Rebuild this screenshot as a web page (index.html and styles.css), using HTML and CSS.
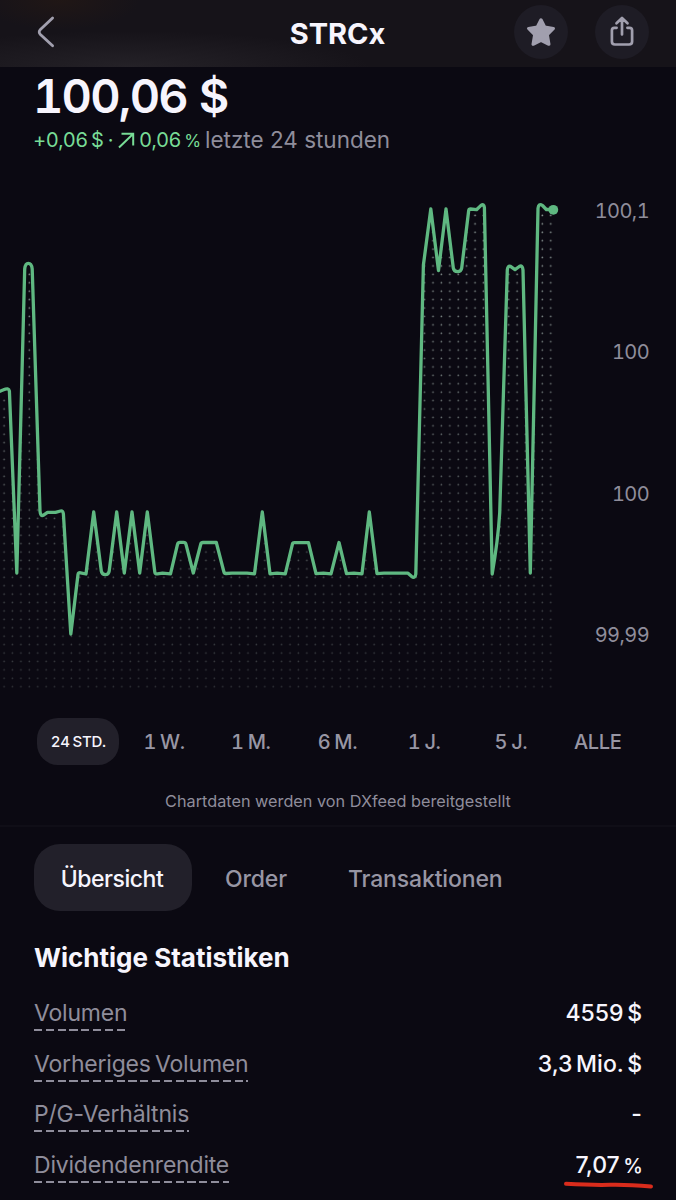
FILE: index.html
```
<!DOCTYPE html>
<html lang="de">
<head>
  <meta charset="UTF-8">
  <meta name="viewport" content="width=device-width, initial-scale=1.0">
  <title>STRCx</title>
  <link rel="stylesheet" href="styles.css">
</head>
<body>
  <header class="topbar">
    <button class="back-btn" aria-label="Zurück">
      <svg width="18" height="32" viewBox="0 0 18 32"><path d="M15.6 2 L3.4 13.6 Q1 16 3.4 18.4 L15.6 29.8"/></svg>
    </button>
    <h1 class="title">STRCx</h1>
    <div class="actions">
      <button class="icon-btn" aria-label="Favorit">
        <svg width="32" height="32" viewBox="0 0 32 32">
          <path class="star" d="M16 3.8 L19.8 11.2 L28.4 12.5 L22.3 18.7 L23.9 28.2 L16 24.2 L8.1 28.2 L9.7 18.7 L3.6 12.5 L12.2 11.2 Z"/>
        </svg>
      </button>
      <button class="icon-btn" aria-label="Teilen">
        <svg width="32" height="32" viewBox="0 0 32 32">
          <path class="share" d="M10.6 11.8 H8.4 Q5.9 11.8 5.9 14.3 V25.5 Q5.9 28.5 8.9 28.5 H23.1 Q26.1 28.5 26.1 25.5 V14.3 Q26.1 11.8 23.6 11.8 H21.4 M16 18.5 V2.6 M10.5 7.2 L16 2 L21.5 7.2"/>
        </svg>
      </button>
    </div>
  </header>

  <main>
    <section class="quote">
      <div class="price">100,06 $</div>
      <div class="change">
        <span class="up">+0,06 $</span>
        <span class="up dot">·</span>
        <svg class="arrow" width="18" height="18" viewBox="0 0 18 18"><path d="M2 16.5 L16 3 M4.5 2.8 H16.2 V14.5"/></svg>
        <span class="up">0,06 <span class="percent">%</span></span>
        <span class="period">letzte 24 stunden</span>
      </div>
    </section>

    <section class="chart">
      <svg class="plot" width="566" height="530" viewBox="0 170 566 530">
        <defs>
          <pattern id="dots" width="8.41" height="8.415" patternUnits="userSpaceOnUse">
            <circle cx="4.1" cy="5.1" r="0.85" fill="#8f9b98"/>
          </pattern>
          <linearGradient id="fade" x1="0" y1="200" x2="0" y2="690" gradientUnits="userSpaceOnUse">
            <stop offset="0" stop-color="#fff" stop-opacity="1"/>
            <stop offset="1" stop-color="#fff" stop-opacity="0.3"/>
          </linearGradient>
          <mask id="fadeMask" maskUnits="userSpaceOnUse" x="0" y="170" width="566" height="530">
            <rect x="0" y="170" width="566" height="520" fill="url(#fade)"/>
          </mask>
        </defs>
        <g mask="url(#fadeMask)">
          <path fill="url(#dots)" d="M0 395 L9 392 L16.8 573 L24.5 270 L32.5 270 L40 516 L63 514 L70.8 634 L78 576 L86 576 L93.7 514 L101.5 576 L109 576 L116.7 514 L124.3 573 L132 514 L139.7 573 L147.3 514 L155 576 L170.5 576 L178 545 L185.5 545 L193.3 576 L201 545 L216.5 545 L224 576 L254.5 576 L262.3 514 L270 576 L285 576 L293 545 L308.5 545 L316 576 L331 576 L339 545 L346.5 576 L362 576 L369.3 514 L377 576 L416 580 L423.3 268 L430.8 212 L438.5 272 L446 212 L453 273 L461.7 273 L469 212 L484.5 210 L492.2 574 L499.5 515 L507.5 270 L523 270 L530.5 573 L538 210 L555 212 L555 690 L0 690 Z"/>
        </g>
        <path class="line" d="M0 391.3 L3.5 389.8 Q8.8 387.3 9.4 391 L16.8 573 L24.7 269 Q25.3 263.4 28.3 263.4 Q31.6 263.4 32.2 269 L40 511 Q40.4 516.6 43.5 515.2 L47.5 512.4 H55.5 L60.5 511 Q63 510.3 63.4 514 L70.8 634 L78 574.5 Q78.4 572.3 80.5 572.8 L86 574 L93.7 512 L101.3 571 Q101.8 574.6 105.3 574.6 Q108.7 574.6 109.2 571 L116.7 512 L124.3 573 L132 512 L139.7 573 L147.3 512 L154.8 572 Q155.1 574.3 157.5 573.8 L162.5 573.2 L170.5 573.8 L177.5 544.3 Q178 542.3 180 542.3 H183.5 Q185.5 542.3 186 544.3 L193.3 573 L200.8 544 Q201.2 542.5 203 542.5 H216.3 L223.8 571.5 Q224.3 573.6 226 573.5 L232 573.2 H247 L254.5 573.8 L262.3 512 L270 573.8 L277 573.2 L285.3 573.8 L292.6 543.3 Q293 542.3 295 542.6 H308.5 L316 573.7 L323.5 573.2 L331 573.8 L339 542.5 L346.5 573.6 L354 573.2 L362 573.8 L369.3 512 L377 573.6 L384 573.2 H408 L411.5 576.3 Q415.2 579 415.8 574 L423.4 265 L430.8 209 L438.5 270.5 L446 209 L453.3 268 Q453.8 271.6 457.5 271.6 Q461.2 271.6 461.7 268 L468.7 210.5 Q469 209 470.5 209 L476.5 209.7 L481 205.4 Q484 203.4 484.4 207.5 L492.2 574 Q498 540 499.7 513 L507.3 270 Q507.7 265.5 510.5 266.4 L515 269.6 L519.3 266.5 Q522.5 264.7 523 270 L530.3 573 L538 208.5 Q538.6 202.6 542.5 205.5 L546.3 209.5 H553"/>
        <circle class="last" cx="553.3" cy="209.8" r="4.9"/>
      </svg>
      <div class="axis">
        <span>100,1</span>
        <span>100</span>
        <span>100</span>
        <span>99,99</span>
      </div>
    </section>

    <nav class="ranges">
      <button class="range active">24 STD.</button>
      <button class="range">1 W.</button>
      <button class="range">1 M.</button>
      <button class="range">6 M.</button>
      <button class="range">1 J.</button>
      <button class="range">5 J.</button>
      <button class="range">ALLE</button>
    </nav>
    <p class="source">Chartdaten werden von DXfeed bereitgestellt</p>

    <nav class="tabs">
      <button class="tab active">Übersicht</button>
      <button class="tab">Order</button>
      <button class="tab transactions">Transaktionen</button>
    </nav>

    <section class="stats">
      <h2>Wichtige Statistiken</h2>
      <div class="row">
        <span class="label">Volumen</span>
        <span class="value">4559 $</span>
      </div>
      <div class="row">
        <span class="label">Vorheriges Volumen</span>
        <span class="value">3,3 Mio. $</span>
      </div>
      <div class="row">
        <span class="label">P/G-Verhältnis</span>
        <span class="value">-</span>
      </div>
      <div class="row">
        <span class="label">Dividendenrendite</span>
        <span class="value">7,07 <span class="percent">%</span>
          <svg class="marker" width="92" height="8" viewBox="0 0 92 8"><path d="M4 2.8 Q30 4.2 48 3.8 T89 5.6"/></svg>
        </span>
      </div>
    </section>
  </main>
</body>
</html>
```
FILE: styles.css
```
* {
  margin: 0;
  padding: 0;
  box-sizing: border-box;
}

body {
  font-family: Inter, 'Liberation Sans', sans-serif;
  background: #0b0912;
  color: #f7f5fd;
  height: 1200px;
  overflow: hidden;
}

button {
  font: inherit;
  color: inherit;
  border: none;
  background: none;
  cursor: pointer;
}

svg {
  display: block;
  fill: none;
}

/* Top bar */
.topbar {
  display: grid;
  grid-template-columns: 1fr auto 1fr;
  align-items: center;
  height: 67px;
  padding: 0 27px 3px 37px;
  background:
    radial-gradient(ellipse 80px 30px at 60px 0, rgba(42, 26, 18, 0.5), transparent),
    radial-gradient(ellipse 240px 36px at 130px 67px, rgba(38, 35, 41, 0.9), transparent),
    #161319;
}

.back-btn {
  justify-self: start;
}

.back-btn path {
  stroke: #a19fae;
  stroke-width: 2.8;
  stroke-linecap: round;
}

.title {
  font-size: 29px;
  font-weight: 700;
  line-height: 32px;
  padding: 3px 11px 0 0;
}

.actions {
  display: flex;
  justify-content: flex-end;
  gap: 27px;
}

.icon-btn {
  display: flex;
  align-items: center;
  justify-content: center;
  width: 54px;
  height: 54px;
  border-radius: 50%;
  background: #1e1c25;
}

.star {
  fill: #a19fae;
  stroke: #a19fae;
  stroke-width: 3.2;
  stroke-linejoin: round;
}

.share {
  stroke: #a19fae;
  stroke-width: 2.7;
  stroke-linecap: round;
  stroke-linejoin: round;
}

/* Price */
.quote {
  height: 103px;
  padding: 2px 33px 0;
}

.price {
  font-size: 47px;
  font-weight: 600;
  line-height: 54px;
  letter-spacing: -1.8px;
  word-spacing: 1px;
  font-variant-numeric: tabular-nums;
}

.change {
  display: flex;
  align-items: baseline;
  height: 30px;
  line-height: 32px;
  white-space: nowrap;
}

.up {
  color: #78dc96;
  font-size: 20px;
  letter-spacing: -0.2px;
  word-spacing: -2px;
}

.percent {
  display: inline-block;
  font-size: 0.86em;
  margin-right: -1px;
}

.arrow {
  margin: 0 4px 0 4px;
  transform: translateY(2px);
}

.arrow path {
  stroke: #78dc96;
  stroke-width: 2;
}

.dot {
  margin-left: 4px;
}

.period {
  color: #8f8d9b;
  font-size: 22.5px;
  margin-left: 5px;
  transform: translateY(1px);
}

/* Chart */
.chart {
  display: flex;
  justify-content: space-between;
  height: 530px;
}

.line {
  stroke: #5fb881;
  stroke-width: 3.3;
  stroke-linejoin: round;
  stroke-linecap: round;
}

.last {
  fill: #5fb881;
}

.axis {
  display: flex;
  flex-direction: column;
  justify-content: space-between;
  align-items: flex-end;
  padding: 29px 27px 53px 0;
  color: #8f8d9b;
  font-size: 20px;
  line-height: 24px;
  letter-spacing: -0.6px;
  font-variant-numeric: tabular-nums;
}

/* Time ranges */
.ranges {
  display: grid;
  grid-template-columns: repeat(7, 1fr);
  justify-items: center;
  height: 65px;
  padding: 18px 35px 0 34px;
}

.range {
  height: 47px;
  color: #9896a4;
  font-size: 20px;
  font-weight: 500;
  letter-spacing: -0.35px;
  word-spacing: -1px;
  white-space: nowrap;
  font-variant-numeric: tabular-nums;
}

.range.active {
  width: 82px;
  margin-left: 2px;
  border-radius: 21px;
  background: #22202a;
  color: #f7f5fd;
  font-size: 15px;
  letter-spacing: -0.25px;
  word-spacing: -1px;
}

.source {
  height: 62px;
  padding-top: 26px;
  border-bottom: 2px solid #100e17;
  color: #8f8d9b;
  font-size: 16.25px;
  line-height: 20px;
  text-align: center;
}

/* Tabs */
.tabs {
  display: flex;
  height: 84px;
  padding: 17px 34px 0;
}

.tab {
  height: 67px;
  padding: 2px 34px 0 33px;
  color: #9896a4;
  font-size: 23px;
  font-weight: 500;
  letter-spacing: -0.15px;
}

.tab.active {
  width: 158px;
  padding: 2px 2px 0 0;
  border-radius: 26px;
  background: #22202a;
  color: #f7f5fd;
  letter-spacing: -0.45px;
}

.tab.transactions {
  padding-left: 27px;
}

/* Stats */
.stats {
  padding: 30px 34px 0;
}

.stats h2 {
  height: 59px;
  font-size: 26px;
  font-weight: 700;
  line-height: 34px;
}

.row {
  display: flex;
  justify-content: space-between;
  height: 50.5px;
  font-size: 23px;
  line-height: 27px;
}

.label {
  height: 31px;
  color: #8f8d9b;
  letter-spacing: -0.2px;
  word-spacing: -2px;
  background: repeating-linear-gradient(90deg, #8f8d9b 0 8.3px, transparent 8.3px 11.8px) 0 100% / 100% 2px no-repeat;
}

.value {
  position: relative;
  font-weight: 500;
  word-spacing: -2.5px;
}

.marker {
  position: absolute;
  top: 29px;
  right: -12px;
}

.marker path {
  stroke: #d92c1c;
  stroke-width: 4;
  stroke-linecap: round;
}
```
